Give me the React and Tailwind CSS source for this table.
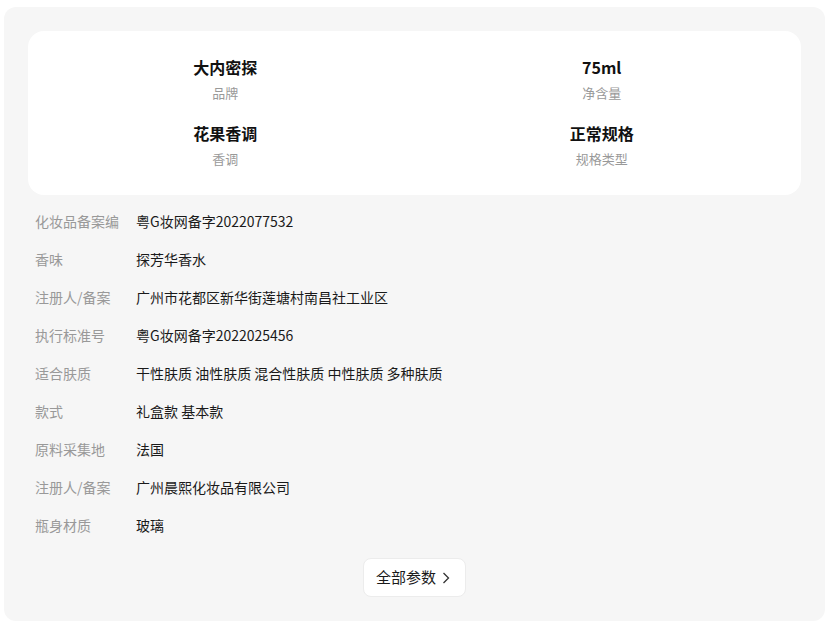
const specs = [
  { value: '大内密探', label: '品牌' },
  { value: '75ml', label: '净含量' },
  { value: '花果香调', label: '香调' },
  { value: '正常规格', label: '规格类型' },
];

const params = [
  ['化妆品备案编', '粤G妆网备字2022077532'],
  ['香味', '探芳华香水'],
  ['注册人/备案', '广州市花都区新华街莲塘村南昌社工业区'],
  ['执行标准号', '粤G妆网备字2022025456'],
  ['适合肤质', '干性肤质 油性肤质 混合性肤质 中性肤质 多种肤质'],
  ['款式', '礼盒款 基本款'],
  ['原料采集地', '法国'],
  ['注册人/备案', '广州晨熙化妆品有限公司'],
  ['瓶身材质', '玻璃'],
];

export default function App() {
  return (
    <div
      className="min-h-screen bg-white pt-[7px] pl-[4px]"
      style={{ fontFamily: '"Microsoft YaHei", "Noto Sans CJK SC", "Noto Sans", sans-serif' }}
    >
      <div className="w-[821px] rounded-xl bg-[#f6f6f6] px-6 pb-6 pt-6">
        {/* key specs */}
        <div className="grid grid-cols-2 gap-y-[18px] rounded-2xl bg-white pl-[9px] pr-[11px] pb-[26px] pt-6">
          {specs.map((s) => (
            <div key={s.label} className="flex flex-col items-center gap-1">
              <div className="text-[16px] font-bold leading-6 text-[#111]">{s.value}</div>
              <div className="text-[13px] leading-5 text-[#999]">{s.label}</div>
            </div>
          ))}
        </div>

        {/* param list */}
        <div className="mt-[7px] pl-[7px]">
          {params.map(([k, v], i) => (
            <div key={i} className="flex h-[38px] items-center text-[14px]">
              <div className="w-[101px] shrink-0 overflow-hidden whitespace-nowrap text-[#999]">{k}</div>
              <div className="text-[#1a1a1a]">{v}</div>
            </div>
          ))}
        </div>

        <div className="mt-[14px] flex justify-center">
          <button className="flex h-[39px] items-center gap-[6px] rounded-lg border border-[#ececec] bg-white pl-[12px] pr-[15px] text-[15px] text-[#1a1a1a]">
            全部参数
            <svg width="8" height="12" viewBox="0 0 8 12" fill="none" stroke="#333" strokeWidth="1.3">
              <polyline points="1.5,1 6.5,6 1.5,11" />
            </svg>
          </button>
        </div>
      </div>
    </div>
  );
}
